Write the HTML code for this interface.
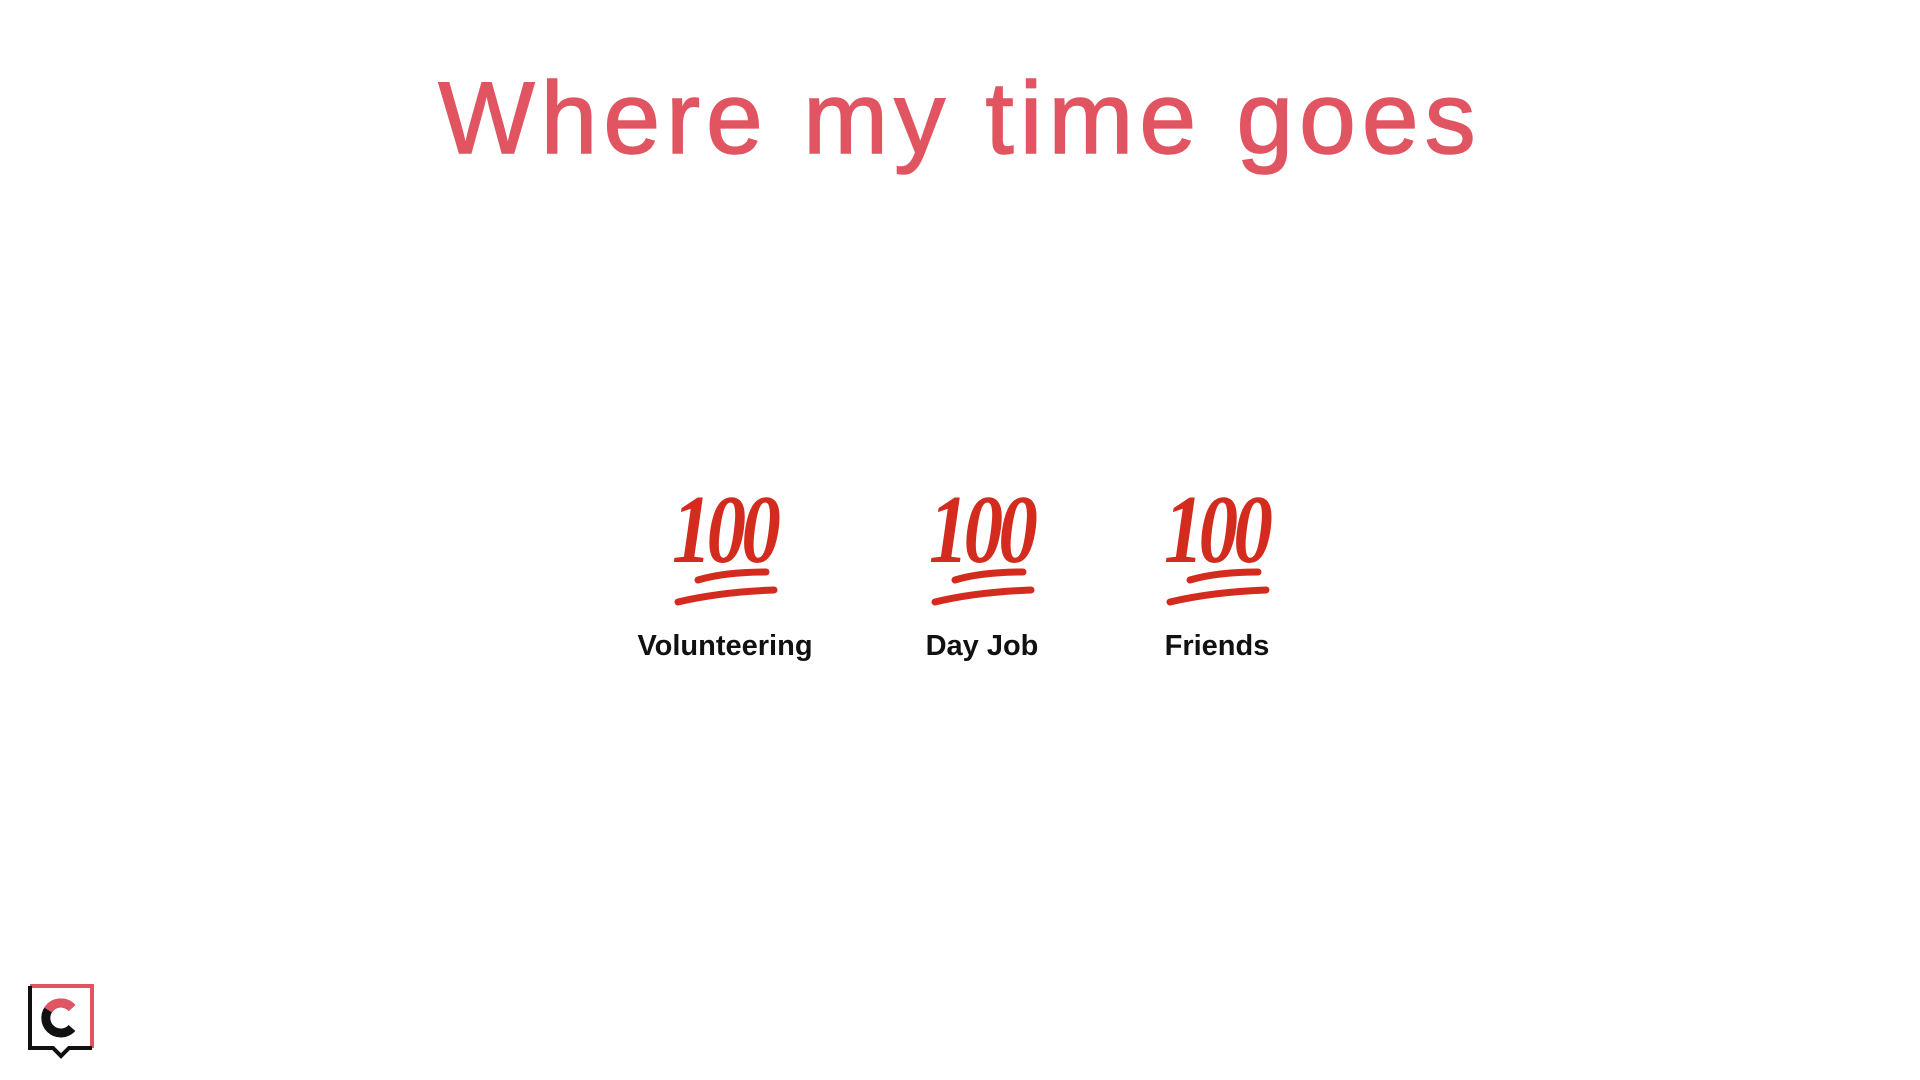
<!DOCTYPE html>
<html><head><meta charset="utf-8"><style>
body{margin:0;width:1920px;height:1080px;background:#fff;position:relative;overflow:hidden;font-family:"Liberation Sans",sans-serif}
h1{position:absolute;top:60px;left:0;width:1920px;text-align:center;margin:0;font-weight:400;font-size:102px;color:#e05561;letter-spacing:6px;-webkit-text-stroke:1.5px #e05561}
.it{position:absolute;top:488px;width:240px;text-align:center}
.it svg{display:block;margin:0 auto}
.it div{font-weight:700;font-size:29px;color:#111;margin-top:22px}
</style></head><body>
<h1>Where my time goes</h1>
<div class="it" style="left:605px"><svg width="110" height="120" viewBox="0 0 110 120"><text x="54" y="74" text-anchor="middle" font-family="Liberation Serif" font-style="italic" font-weight="700" font-size="98" fill="#d32b1e" letter-spacing="-6" textLength="104" lengthAdjust="spacingAndGlyphs">100</text><path d="M28 92 Q55 84 96 84" stroke="#d32b1e" stroke-width="7" fill="none" stroke-linecap="round"/><path d="M8 114 Q50 104 104 102" stroke="#d32b1e" stroke-width="7" fill="none" stroke-linecap="round"/></svg><div>Volunteering</div></div>
<div class="it" style="left:862px"><svg width="110" height="120" viewBox="0 0 110 120"><text x="54" y="74" text-anchor="middle" font-family="Liberation Serif" font-style="italic" font-weight="700" font-size="98" fill="#d32b1e" letter-spacing="-6" textLength="104" lengthAdjust="spacingAndGlyphs">100</text><path d="M28 92 Q55 84 96 84" stroke="#d32b1e" stroke-width="7" fill="none" stroke-linecap="round"/><path d="M8 114 Q50 104 104 102" stroke="#d32b1e" stroke-width="7" fill="none" stroke-linecap="round"/></svg><div>Day Job</div></div>
<div class="it" style="left:1097px"><svg width="110" height="120" viewBox="0 0 110 120"><text x="54" y="74" text-anchor="middle" font-family="Liberation Serif" font-style="italic" font-weight="700" font-size="98" fill="#d32b1e" letter-spacing="-6" textLength="104" lengthAdjust="spacingAndGlyphs">100</text><path d="M28 92 Q55 84 96 84" stroke="#d32b1e" stroke-width="7" fill="none" stroke-linecap="round"/><path d="M8 114 Q50 104 104 102" stroke="#d32b1e" stroke-width="7" fill="none" stroke-linecap="round"/></svg><div>Friends</div></div>
<svg style="position:absolute;left:26px;top:982px" width="70" height="80" viewBox="0 0 70 80">
<path d="M4 4 H66 V66" stroke="#e05561" stroke-width="4" fill="none"/>
<path d="M4 4 V66 H27 L35 74 L43 66 H66" stroke="#111" stroke-width="4" fill="none"/>
<path d="M46 26 A15 15 0 1 0 46 46" stroke="#111" stroke-width="9" fill="none"/>
<path d="M22 28 A15 15 0 0 1 46 26" stroke="#e05561" stroke-width="9" fill="none"/>
</svg>
</body></html>
